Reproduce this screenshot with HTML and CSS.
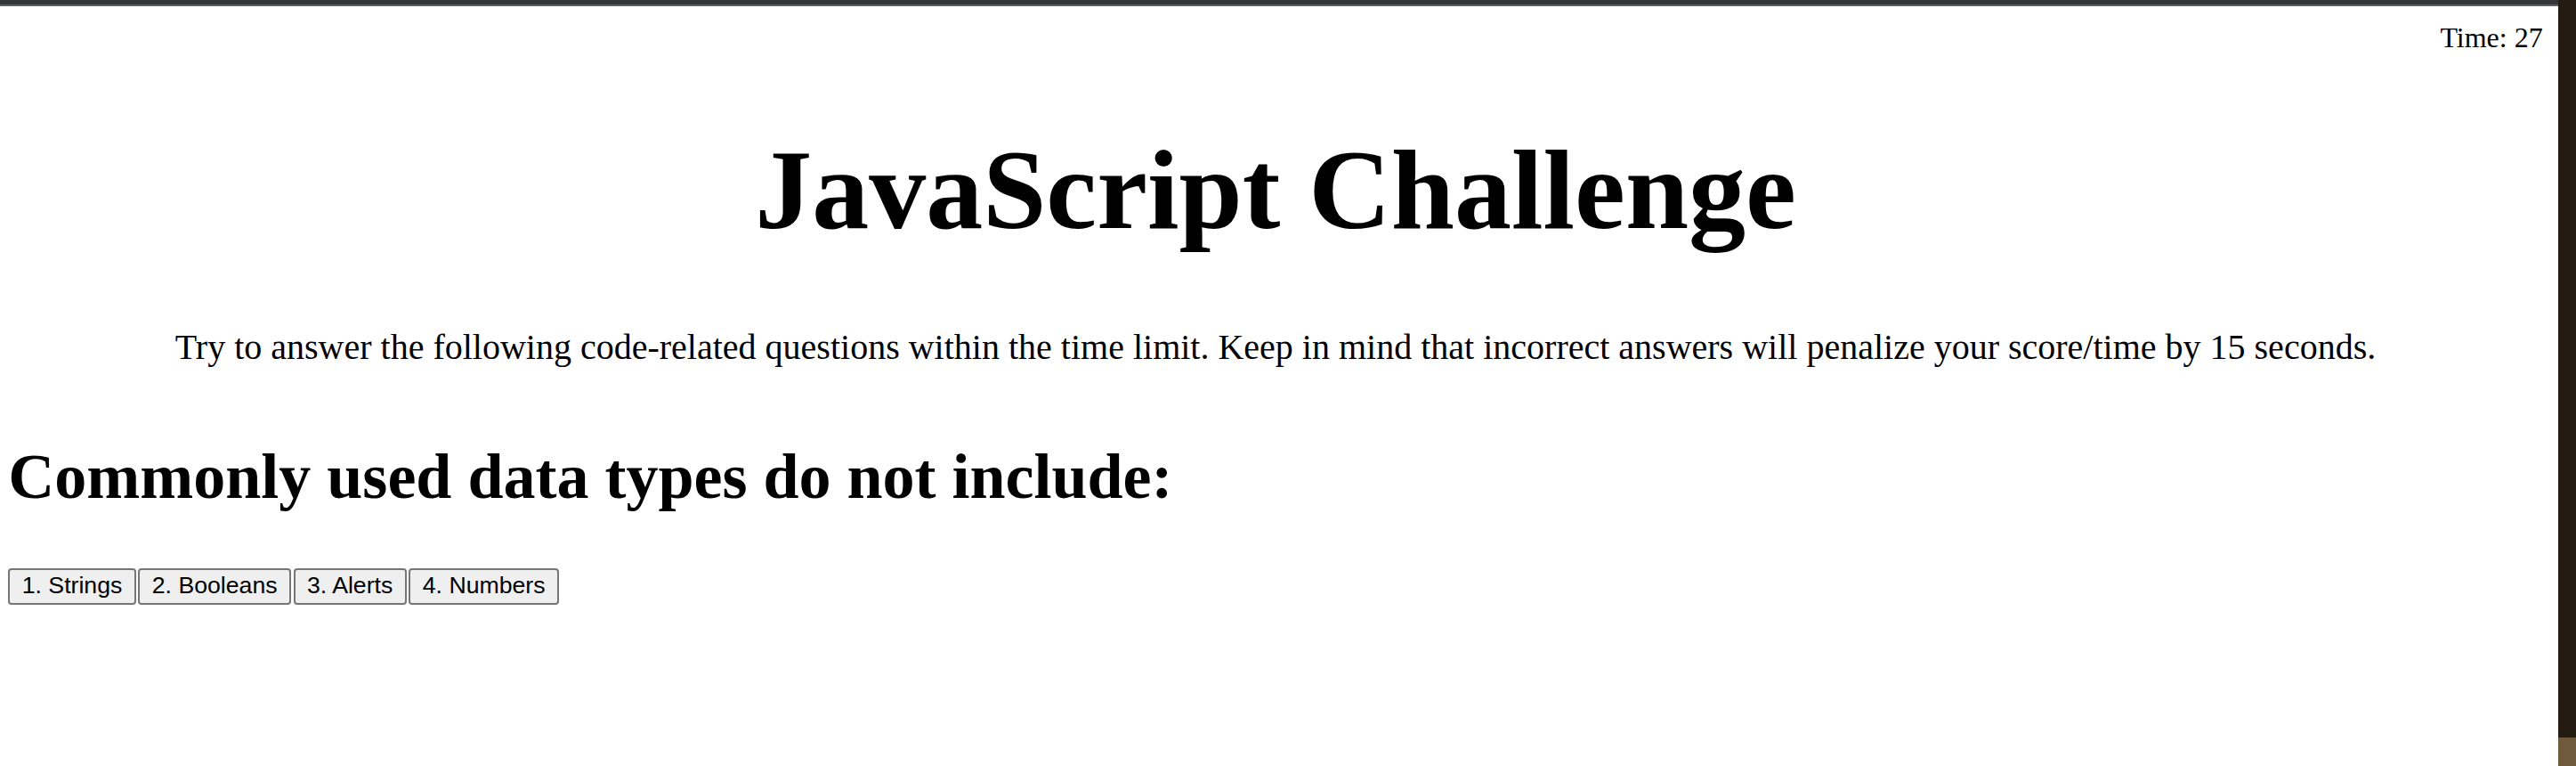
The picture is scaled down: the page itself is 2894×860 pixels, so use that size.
FILE: index.html
```html
<!DOCTYPE html>
<html lang="en">
<head>
<meta charset="utf-8">
<title>JavaScript Challenge</title>
<link rel="stylesheet" href="styles.css">
</head>
<body>
<div class="window">
  <div class="page">
    <div class="topbar"></div>
    <main class="content">
      <div class="timer">Time: 27</div>
      <h1 class="title">JavaScript Challenge</h1>
      <p class="intro">Try to answer the following code-related questions within the time limit. Keep in mind that incorrect answers will penalize your score/time by 15 seconds.</p>
      <h2 class="question">Commonly used data types do not include:</h2>
      <div class="choices">
        <button class="choice">1. Strings</button>
        <button class="choice">2. Booleans</button>
        <button class="choice">3. Alerts</button>
        <button class="choice">4. Numbers</button>
      </div>
    </main>
  </div>
  <div class="strip">
    <div class="strip-track"></div>
    <div class="strip-foot"></div>
  </div>
</div>
</body>
</html>
```

FILE: styles.css
```css
html, body {
  margin: 0;
  padding: 0;
  background: #ffffff;
}

body {
  font-family: "Liberation Serif", "Times New Roman", serif;
  color: #000000;
}

.window {
  display: flex;
  height: 100vh;
  overflow: hidden;
}

.page {
  flex: 1;
  display: flex;
  flex-direction: column;
  min-width: 0;
}

.topbar {
  height: 5px;
  background: #343539;
  border-bottom: 2px solid #5f5f63;
}

.content {
  padding: 0 17.3px 0 9.33px;
}

.timer {
  margin-top: 16.5px;
  font-size: 32px;
  line-height: 36px;
  text-align: right;
}

.title {
  margin: 79.3px 0 0;
  font-size: 128px;
  line-height: 148px;
  font-weight: bold;
  text-align: center;
}

.intro {
  margin: 80.7px 0 0;
  font-size: 40px;
  line-height: 46px;
  text-align: center;
}

.question {
  margin: 80.7px 0 0;
  font-size: 72px;
  line-height: 83px;
  font-weight: bold;
}

.choices {
  margin-top: 60.5px;
  display: flex;
  gap: 2.67px;
}

.choice {
  font-family: "Liberation Sans", Arial, sans-serif;
  font-size: 26.67px;
  line-height: 30px;
  padding: 2px 13.4px 5.6px;
  color: #000000;
  background: #efefef;
  border: 2px solid #767676;
  border-radius: 4px;
  margin: 0;
}

.strip {
  width: 20px;
  display: flex;
  flex-direction: column;
}

.strip-track {
  flex: 1;
  background: #241c11;
}

.strip-foot {
  height: 32px;
  background: #6f5a3d;
}
```
